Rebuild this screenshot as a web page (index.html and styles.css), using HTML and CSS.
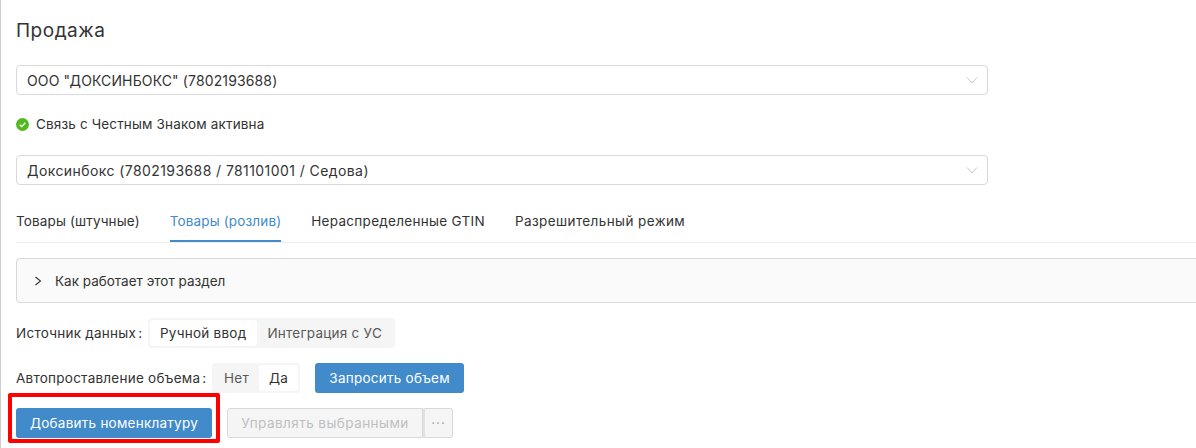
FILE: index.html
```html
<!DOCTYPE html>
<html lang="en">
<head>
    <meta charset="UTF-8">
    <title>Продажа</title>
    <link rel="stylesheet" href="styles.css">
</head>
<body>
    <div class="page">
        <h2 class="title">Продажа</h2>

        <div class="select">
            <span>ООО "ДОКСИНБОКС" (7802193688)</span>
            <svg class="select-arrow" width="12" height="8" viewBox="0 0 12 8"><path d="M1 1.5l5 5.5 5-5.5" fill="none" stroke="#c8c8c8"/></svg>
        </div>

        <div class="status">
            <svg width="13" height="13" viewBox="0 0 13 13"><circle cx="6.5" cy="6.5" r="6.5" fill="#52b920"/><path d="M3.7 6.7l2 1.9 3.6-3.9" fill="none" stroke="#fff" stroke-width="1.3"/></svg>
            <span>Связь с Честным Знаком активна</span>
        </div>

        <div class="select select-long">
            <span>Доксинбокс (7802193688 / 781101001 / Седова)</span>
            <svg class="select-arrow" width="12" height="8" viewBox="0 0 12 8"><path d="M1 1.5l5 5.5 5-5.5" fill="none" stroke="#c8c8c8"/></svg>
        </div>

        <div class="tabs">
            <div class="tab">Товары (штучные)</div>
            <div class="tab tab-active">Товары (розлив)</div>
            <div class="tab tab-gtin">Нераспределенные GTIN</div>
            <div class="tab tab-wide">Разрешительный режим</div>
        </div>

        <div class="accordion">
            <svg width="8" height="10" viewBox="0 0 8 10"><path d="M1.5 1l5 4-5 4" fill="none" stroke="#333" stroke-width="1.1"/></svg>
            <span>Как работает этот раздел</span>
        </div>

        <div class="row row-source">
            <span class="row-label">Источник данных</span>
            <div class="segment">
                <div class="segment-item segment-on">Ручной ввод</div>
                <div class="segment-item">Интеграция с УС</div>
            </div>
        </div>

        <div class="row row-volume">
            <span class="row-label">Автопроставление объема</span>
            <div class="segment">
                <div class="segment-item">Нет</div>
                <div class="segment-item segment-on">Да</div>
            </div>
            <button class="btn btn-request">Запросить объем</button>
        </div>

        <div class="row row-actions">
            <button class="btn btn-add">Добавить номенклатуру</button>
            <div class="btn-group">
                <button class="btn-off btn-manage">Управлять выбранными</button>
                <button class="btn-off btn-more">···</button>
            </div>
            <div class="highlight"></div>
        </div>
    </div>
</body>
</html>
```

FILE: styles.css
```css
/* General Page Styling */
html, body {
    margin: 0;
    height: 100%;
    overflow: hidden;
    background-color: #fff;
}

body {
    font-family: 'Inter', 'Open Sans', sans-serif;
    font-size: 13.5px;
    letter-spacing: 0.25px;
    color: #333;
}

.page {
    height: 448px;
    box-sizing: border-box;
    border-left: 1px solid #ccc;
    padding-left: 15px;
    overflow: hidden;
}

.title {
    margin: 0;
    padding-top: 20px;
    height: 65px;
    box-sizing: border-box;
    font-size: 19px;
    line-height: 22px;
    font-weight: 400;
    letter-spacing: 0.5px;
}

.select {
    width: 972px;
    height: 30px;
    box-sizing: border-box;
    border: 1px solid #d9d9d9;
    border-radius: 4px;
    padding: 0 9px 0 10px;
    display: flex;
    align-items: center;
    justify-content: space-between;
    font-size: 14px;
    letter-spacing: 0.13px;
}

.select-long {
    letter-spacing: 0.42px;
}

.status {
    height: 60px;
    padding-bottom: 2px;
    box-sizing: border-box;
    display: flex;
    align-items: center;
    gap: 7px;
    letter-spacing: 0.15px;
}

.tabs {
    margin-top: 21px;
    height: 36px;
    display: flex;
    gap: 30px;
    border-bottom: 1px solid #eee;
    letter-spacing: 0.15px;
}

.tab {
    padding-top: 7px;
    height: 36px;
    box-sizing: border-box;
}

.tab-gtin {
    letter-spacing: 0.3px;
}

.tab-wide {
    letter-spacing: 0.4px;
}

.tab-active {
    color: #428bca;
    border-bottom: 2px solid #428bca;
}

.accordion {
    margin-top: 15px;
    margin-right: -6px;
    height: 45px;
    box-sizing: border-box;
    border: 1px solid #d9d9d9;
    border-radius: 4px;
    background-color: #fafafa;
    padding-left: 17px;
    display: flex;
    align-items: center;
    gap: 13px;
    letter-spacing: 0;
}

.row {
    display: flex;
    align-items: center;
    height: 30px;
    margin-top: 15px;
    position: relative;
}

.row-label::after {
    content: ":";
    margin-left: 2px;
}

.row-source .row-label {
    width: 132px;
}

.row-source .segment-item {
    padding-right: 11px;
}

.row-volume .row-label {
    width: 196px;
}

.segment {
    display: flex;
    height: 30px;
    box-sizing: border-box;
    padding: 2px;
    background-color: #f5f5f5;
    border-radius: 4px;
}

.segment-item {
    padding: 0 10px;
    line-height: 26px;
    color: #595959;
    border-radius: 3px;
}

.segment-on {
    background-color: #fff;
    color: #333;
}

.btn {
    height: 30px;
    border: none;
    border-radius: 3px;
    background-color: #428bca;
    color: #fff;
    font-family: inherit;
    font-size: 13.5px;
    letter-spacing: 0.25px;
    padding: 0;
}

.btn-request {
    width: 149px;
    margin-left: 15px;
}

.btn-add {
    width: 196px;
}

.btn-group {
    display: flex;
    margin-left: 15px;
}

.btn-off {
    height: 30px;
    border: 1px solid #d9d9d9;
    background-color: #f5f5f5;
    color: #bfbfbf;
    font-family: inherit;
    font-size: 13.5px;
    letter-spacing: 0.45px;
    padding: 0;
}

.btn-manage {
    width: 196px;
    border-radius: 3px 0 0 3px;
}

.btn-more {
    width: 30px;
    border-left: 2px solid #e2e2e2;
    border-radius: 0 3px 3px 0;
    letter-spacing: 1px;
    color: #aaa;
}

/* red frame around the add button */
.highlight {
    position: absolute;
    left: -8px;
    top: -15px;
    width: 212px;
    height: 50px;
    box-sizing: border-box;
    border: 4px solid #f00;
    border-radius: 2px;
}
```
